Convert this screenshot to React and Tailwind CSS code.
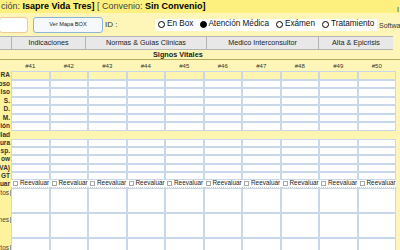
import React from "react";

const cols = ["#41", "#42", "#43", "#44", "#45", "#46", "#47", "#48", "#49", "#50"];

function Radio({ filled }) {
  return (
    <span
      className={
        "inline-block w-[7px] h-[7px] rounded-full border-[1.3px] border-black " +
        (filled ? "bg-black" : "bg-white")
      }
    />
  );
}

function Label({ children }) {
  return (
    <div className="w-[11px] shrink-0 overflow-hidden flex justify-end items-center bg-[#fdf39c] pr-[1px]">
      <span className="whitespace-nowrap font-bold text-[6.5px] leading-none text-[#333]">{children}</span>
    </div>
  );
}

function DataRow({ label, h, yellow }) {
  return (
    <div className={"flex " + h}>
      <Label>{label}</Label>
      <div className="w-[385px] grid grid-cols-10">
        {cols.map((c) => (
          <div
            key={c}
            className={
              "border border-[#c9d7ea] " + (yellow ? "bg-[#fdf5b0]" : "bg-white")
            }
          />
        ))}
      </div>
    </div>
  );
}

function BigRow({ label, h, pt }) {
  return (
    <div className={"flex " + h}>
      <div className={"w-[11px] shrink-0 overflow-hidden flex justify-end items-start bg-[#fdf39c] " + pt}>
        <span className="whitespace-nowrap text-[6.5px] leading-none text-[#444]">{label}</span>
        <span className="w-[1px] h-[6px] bg-[#9a9a9a] ml-[1px] shrink-0" />
      </div>
      <div className="w-[385px] grid grid-cols-10">
        {cols.map((c) => (
          <div key={c} className="border border-[#c9d7ea] bg-white" />
        ))}
      </div>
    </div>
  );
}

export default function App() {
  return (
    <div className="w-[400px] h-[250px] overflow-hidden bg-[#fdf6b8] font-['Liberation_Sans',Arial,sans-serif] text-[#222]">
      {/* top bar */}
      <div className="h-[13px] bg-[#fdf07e] flex items-center pl-[1px] whitespace-nowrap text-[9px] leading-none">
        <span className="text-[#444]">ción:&nbsp;</span>
        <span className="font-bold text-black">Isapre Vida Tres]</span>
        <span className="text-[#444]">&nbsp;[ Convenio:&nbsp;</span>
        <span className="font-bold text-black">Sin Convenio]</span>
      </div>

      {/* controls row */}
      <div className="h-[23px] flex items-center relative">
        <div className="w-[29px] h-[16px] -ml-[1px] shrink-0 bg-white border border-[#f2c79a] rounded-[3px]" />
        <div className="ml-[5px] w-[70px] h-[16px] shrink-0 bg-[#f5f9fd] border border-[#8fb3d6] rounded-[3px] flex items-center justify-center text-[5.6px] leading-none text-[#222] whitespace-nowrap">
          Ver Mapa BOX
        </div>
        <span className="ml-[2px] w-[12px] shrink-0 text-[8px] leading-none text-[#333] whitespace-nowrap">ID :</span>
        <div className="ml-[38px] w-[222px] h-[12px] shrink-0 bg-white flex items-center pl-[3px] gap-[7px] text-[8.2px] leading-none text-[#111] whitespace-nowrap">
          <span className="flex items-center gap-[2px]"><Radio />En Box</span>
          <span className="flex items-center gap-[1px]"><Radio filled />Atención Médica</span>
          <span className="flex items-center gap-[2px]"><Radio />Exámen</span>
          <span className="flex items-center gap-[2px]"><Radio />Tratamiento</span>
        </div>
        <div className="ml-[2px] flex flex-col text-[7px] leading-none text-[#333] whitespace-nowrap">
          <span className="pl-[18px] -mt-[14px] mb-[9px]">I</span>
          <span>Softwa</span>
        </div>
      </div>

      {/* tabs */}
      <div className="h-[14px] w-[393px] flex bg-[#e8e8e8] border-t border-b border-[#b4b4b4] text-[7.2px] leading-none text-[#222]">
        <div className="w-[12px] border-r border-[#b4b4b4]" />
        <div className="w-[74px] border-r border-[#b4b4b4] flex items-center justify-center">Indicaciones</div>
        <div className="w-[121px] border-r border-[#b4b4b4] flex items-center justify-center whitespace-nowrap">Normas &amp; Guias Clinicas</div>
        <div className="w-[112px] border-r border-[#b4b4b4] flex items-center justify-center whitespace-nowrap">Medico Interconsultor</div>
        <div className="flex-1 flex items-center justify-center whitespace-nowrap">Alta &amp; Epicrisis</div>
      </div>

      {/* section title */}
      <div className="h-[10px] border-b border-[#b3a85a] flex items-center pl-[153px] text-[7.3px] font-bold leading-none text-[#222] whitespace-nowrap">
        Signos Vitales
      </div>

      {/* header numbers */}
      <div className="h-[11px] flex">
        <div className="w-[11px] shrink-0" />
        <div className="w-[385px] grid grid-cols-10">
          {cols.map((c) => (
            <div key={c} className="flex items-center justify-center text-[6px] leading-none text-[#333]">
              {c}
            </div>
          ))}
        </div>
      </div>

      <DataRow label="RA" h="h-[9px]" yellow />
      <DataRow label="oso" h="h-[8px]" />
      <DataRow label="lso" h="h-[9px]" />
      <DataRow label="S." h="h-[8px]" />
      <DataRow label="D." h="h-[9px]" />
      <DataRow label="M." h="h-[8px]" />
      <DataRow label="ión" h="h-[9px]" />

      <div className="flex h-[8px]">
        <Label>llad</Label>
        <div className="w-[385px] bg-[#fdf5b0]" />
      </div>

      <DataRow label="ura" h="h-[8px]" />
      <DataRow label="sp." h="h-[8px]" />
      <DataRow label="ow" h="h-[9px]" />
      <DataRow label="VA)" h="h-[8px]" />
      <DataRow label="GT" h="h-[8px]" />

      {/* Reevaluar row */}
      <div className="flex h-[8px]">
        <Label>uar</Label>
        <div className="w-[385px] grid grid-cols-10 bg-white">
          {cols.map((c) => (
            <div key={c} className="flex items-center gap-[2px] pl-[2px] overflow-hidden border-b border-dotted border-[#cfcfcf]">
              <span className="w-[5px] h-[5px] border border-[#a9a9a9] bg-white shrink-0" />
              <span className="text-[6.4px] leading-none text-[#222] whitespace-nowrap">Reevaluar</span>
            </div>
          ))}
        </div>
      </div>

      <BigRow label="tos" h="h-[25px]" pt="pt-[2px]" />
      <BigRow label="nes" h="h-[25px]" pt="pt-[4px]" />
      <BigRow label="tos" h="h-[25px]" pt="pt-[7px]" />
    </div>
  );
}
